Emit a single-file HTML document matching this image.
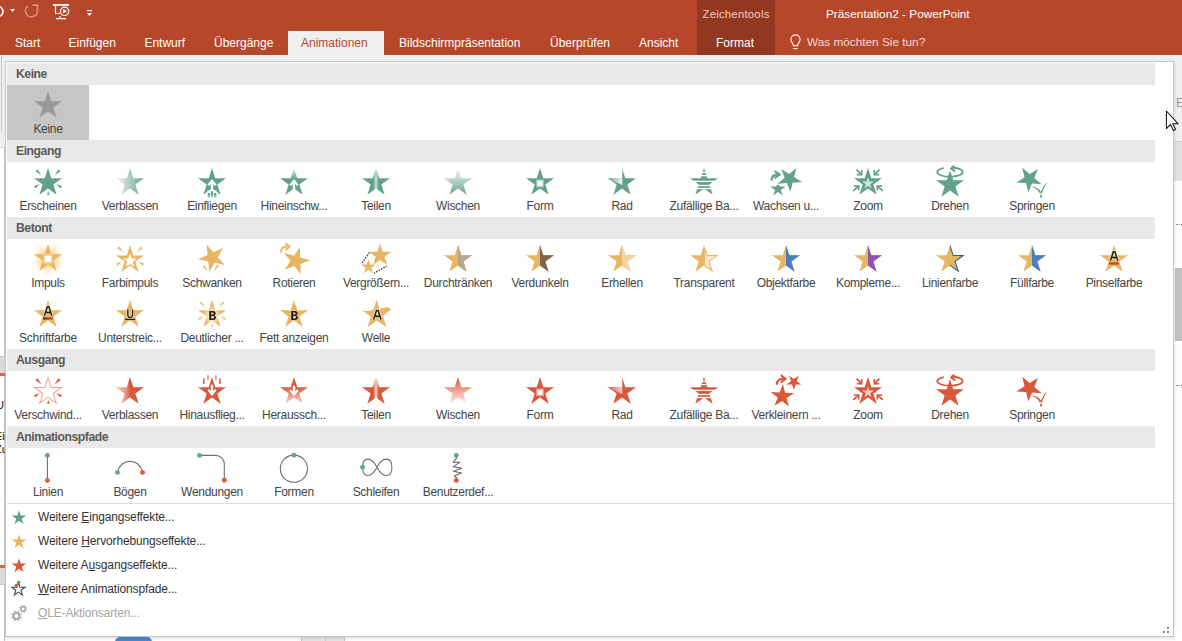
<!DOCTYPE html><html><head><meta charset="utf-8"><style>
*{margin:0;padding:0;box-sizing:border-box}
body{width:1182px;height:641px;overflow:hidden;background:#fff;position:relative;font-family:"Liberation Sans",sans-serif}
.a{position:absolute}
.tab{position:absolute;top:36px;color:#fff;font-size:12px;line-height:14px;white-space:nowrap}
.hd{position:absolute;left:7px;width:1148px;height:22px;background:#E9E9E9}
.hd span{position:absolute;left:9px;top:3.6px;font-weight:bold;font-size:12.2px;letter-spacing:-0.45px;color:#5A5A5A;line-height:14px}
.cell{position:absolute;width:82px;height:55px}
.cell svg{position:absolute;left:0;top:0;overflow:hidden}
.lb{position:absolute;left:-10px;width:102px;top:36.8px;text-align:center;font-size:12px;letter-spacing:-0.3px;line-height:14px;color:#444;white-space:nowrap}
.mi{position:absolute;left:38px;font-size:12px;letter-spacing:-0.15px;color:#3A3A3A;line-height:14px;white-space:nowrap}
</style></head><body>
<div class="a" style="left:0;top:55px;width:1182px;height:92px;background:#F0F0F0"></div>
<div class="a" style="left:0;top:147px;width:1182px;height:1px;background:#D4D4D4"></div>
<div class="a" style="left:0;top:148px;width:1182px;height:493px;background:#FFFFFF"></div>
<div class="a" style="left:1px;top:56px;width:1px;height:76px;background:#C8C8C8"></div>
<div class="a" style="left:0;top:148px;width:4px;height:493px;background:#fff"></div>
<div class="a" style="left:4px;top:148px;width:1px;height:493px;background:#C6C6C6"></div>
<div class="a" style="left:0;top:356px;width:5px;height:1px;background:#C4C4C4"></div>
<div class="a" style="left:0;top:357px;width:5px;height:16px;background:#DADADA"></div>
<div class="a" style="left:0;top:373px;width:5px;height:3px;background:#E2633D"></div>
<div class="a" style="left:0;top:565px;width:5px;height:3px;background:#E2633D"></div>
<div class="a" style="left:0;top:568px;width:5px;height:16px;background:#DCDCDC"></div>
<div class="a" style="left:0;top:584px;width:5px;height:1px;background:#C4C4C4"></div>
<div class="a" style="left:0;top:396px;width:5px;height:60px;overflow:hidden;font-size:11px;line-height:13px;color:#111"><div style="position:absolute;left:-4px;top:3px">U</div><div style="position:absolute;left:-5px;top:34px">Ei</div><div style="position:absolute;left:-5px;top:47px">Zu</div></div>
<div class="a" style="left:1174px;top:141px;width:8px;height:40px;background:#E2E2E2;border-top:1px solid #D0D0D0"></div>
<div class="a" style="left:1174px;top:181px;width:8px;height:460px;background:#fff"></div>
<div class="a" style="left:1175px;top:268px;width:7px;height:73px;background:#C2C2C2"></div>
<div class="a" style="left:1176px;top:224px;width:6px;height:0;border-top:1px dotted #888"></div>
<div class="a" style="left:1176px;top:385px;width:6px;height:0;border-top:1px dotted #888"></div>
<div class="a" style="left:1176px;top:96px;font-size:12px;color:#9A9A9A;line-height:14px">E</div>
<div class="a" style="left:115px;top:637px;width:37px;height:8px;background:#4A88D0;border-radius:5px 5px 0 0"></div>
<div class="a" style="left:301px;top:637px;width:44px;height:4px;background:#E6E6E6;border-left:1px solid #C8C8C8;border-right:1px solid #C8C8C8"></div>
<div class="a" style="left:325px;top:637px;width:1px;height:4px;background:#C8C8C8"></div>
<div class="a" style="left:0;top:0;width:1182px;height:55px;background:#B7472A"></div>
<div class="a" style="left:697px;top:0;width:78px;height:55px;background:#923821"></div>
<div class="a" style="left:288px;top:31px;width:96px;height:24px;background:#F0F0F0"></div>
<div class="tab" style="left:15px">Start</div>
<div class="tab" style="left:68.5px">Einfügen</div>
<div class="tab" style="left:144.4px">Entwurf</div>
<div class="tab" style="left:214px">Übergänge</div>
<div class="tab" style="left:399px">Bildschirmpräsentation</div>
<div class="tab" style="left:550px">Überprüfen</div>
<div class="tab" style="left:639px">Ansicht</div>
<div class="tab" style="left:716px">Format</div>
<div class="tab" style="left:301px;color:#B7472A">Animationen</div>
<div class="tab" style="left:702.5px;top:7px;color:#F2CDBF;font-size:11.3px;letter-spacing:0.25px">Zeichentools</div>
<div class="tab" style="left:826px;top:7px;font-size:11.8px">Präsentation2 - PowerPoint</div>
<div class="tab" style="left:807px;top:35px;color:#F5DAD2;font-size:11.8px">Was möchten Sie tun?</div>
<svg class="a" style="left:786px;top:33px" width="18" height="18" viewBox="0 0 18 18"><path d="M7.4 12.6 C7.4 10.4 4.9 9.2 4.9 6.4 C4.9 3.7 7 1.8 9.5 1.8 C12 1.8 14.1 3.7 14.1 6.4 C14.1 9.2 11.6 10.4 11.6 12.6 Z" fill="none" stroke="#FFF4F0" stroke-width="1.15"/><path d="M7.3 15.6 L11.7 15.6" stroke="#FFF4F0" stroke-width="1.2"/></svg>
<svg class="a" style="left:0;top:0" width="100" height="26" viewBox="0 0 100 26"><path d="M-2 6.5 A5 5 0 1 1 -2 16.5" fill="none" stroke="#fff" stroke-width="1.6"/><path d="M10 9 L15 9 L12.5 12 Z" fill="#fff"/><path d="M27.97 5.95 A6 6 0 1 0 37.14 8.75" fill="none" stroke="#D98E7A" stroke-width="1.7"/><path d="M32.3 5.1 L37.4 5.1 L37.4 10" fill="none" stroke="#D98E7A" stroke-width="1.7"/><rect x="53" y="4" width="16" height="1.8" fill="#fff"/><path d="M55.5 5.5 L55.5 13.5 L60 13.5" fill="none" stroke="#fff" stroke-width="1.2"/><circle cx="64.6" cy="11.3" r="4.2" fill="none" stroke="#fff" stroke-width="1.2"/><path d="M63.2 9.1 L67 11.3 L63.2 13.5 Z" fill="#fff"/><path d="M56 18.6 L66 18.6 M59.6 16.2 L61 18.6" fill="none" stroke="#fff" stroke-width="1.2"/><path d="M87 10.6 L92 10.6" stroke="#fff" stroke-width="1.1"/><path d="M87 13 L92 13 L89.5 16 Z" fill="#fff"/></svg>
<div class="a" style="left:6px;top:62px;width:1169px;height:577px;background:rgba(0,0,0,0.10);filter:blur(1.5px)"></div>
<div class="a" style="left:5px;top:61px;width:1169px;height:576px;background:#fff;border:1px solid #C6C6C6"></div>
<div class="hd" style="top:63px"><span>Keine</span></div>
<div class="hd" style="top:140px"><span>Eingang</span></div>
<div class="hd" style="top:217px"><span>Betont</span></div>
<div class="hd" style="top:349px"><span>Ausgang</span></div>
<div class="hd" style="top:426px"><span>Animationspfade</span></div>
<div class="cell" style="left:7px;top:85px;background:#C6C6C6"><svg width="82" height="37" viewBox="0 0 82 37"><path d="M41.00 6.10 L44.30 16.26 L54.98 16.26 L46.34 22.54 L49.64 32.69 L41.00 26.42 L32.36 32.69 L35.66 22.54 L27.02 16.26 L37.70 16.26Z" fill="#9A9A9A" /></svg><div class="lb">Keine</div></div>
<div class="cell" style="left:7px;top:162px"><svg width="82" height="37" viewBox="0 0 82 37"><path d="M41.00 6.10 L44.30 16.26 L54.98 16.26 L46.34 22.54 L49.64 32.69 L41.00 26.42 L32.36 32.69 L35.66 22.54 L27.02 16.26 L37.70 16.26Z" fill="#62A28B" /><path d="M34.50 13.40 L30.36 7.25 L28.44 9.15 Z" fill="#62A28B"/><path d="M47.50 13.40 L53.56 9.15 L51.64 7.25 Z" fill="#62A28B"/><path d="M32.90 22.10 L26.98 24.26 L28.42 26.54 Z" fill="#62A28B"/><path d="M49.10 22.10 L53.58 26.54 L55.02 24.26 Z" fill="#62A28B"/><path d="M41.30 28.90 L39.95 32.80 L42.65 32.80 Z" fill="#62A28B"/></svg><div class="lb">Erscheinen</div></div>
<div class="cell" style="left:89px;top:162px"><svg width="82" height="37" viewBox="0 0 82 37"><defs><linearGradient id="g1" gradientUnits="userSpaceOnUse" x1="26" y1="0" x2="56" y2="0"><stop offset="0" stop-color="#F2F8F6"/><stop offset="1" stop-color="#62A28B"/></linearGradient></defs><path d="M41.00 6.10 L44.30 16.26 L54.98 16.26 L46.34 22.54 L49.64 32.69 L41.00 26.42 L32.36 32.69 L35.66 22.54 L27.02 16.26 L37.70 16.26Z" fill="url(#g1)" /></svg><div class="lb">Verblassen</div></div>
<div class="cell" style="left:171px;top:162px"><svg width="82" height="37" viewBox="0 0 82 37"><path d="M41.00 6.10 L44.30 16.26 L54.98 16.26 L46.34 22.54 L49.64 32.69 L41.00 26.42 L32.36 32.69 L35.66 22.54 L27.02 16.26 L37.70 16.26Z" fill="#62A28B" /><path d="M41 17.1 L45.5 22.5 L44 23.9 L42.2 21.9 L42.2 29 L39.8 29 L39.8 21.9 L38 23.9 L36.5 22.5 Z" fill="#fff"/><rect x="36.3" y="28.6" width="9.4" height="3" fill="#fff"/><defs><linearGradient id="g2" gradientUnits="userSpaceOnUse" x1="0" y1="29" x2="0" y2="36.5"><stop offset="0" stop-color="#62A28B"/><stop offset="0.55" stop-color="#62A28B"/><stop offset="1" stop-color="#fff"/></linearGradient></defs><rect x="36.7" y="31" width="2.3" height="5.5" fill="url(#g2)"/><rect x="39.9" y="29.2" width="2.3" height="7.3" fill="url(#g2)"/><rect x="43.1" y="31" width="2.3" height="5.5" fill="url(#g2)"/></svg><div class="lb">Einfliegen</div></div>
<div class="cell" style="left:253px;top:162px"><svg width="82" height="37" viewBox="0 0 82 37"><defs><linearGradient id="g3" gradientUnits="userSpaceOnUse" x1="0" y1="6" x2="0" y2="24"><stop offset="0" stop-color="#E6F1ED"/><stop offset="0.6" stop-color="#62A28B"/><stop offset="1" stop-color="#62A28B"/></linearGradient></defs><path d="M41.00 6.10 L44.30 16.26 L54.98 16.26 L46.34 22.54 L49.64 32.69 L41.00 26.42 L32.36 32.69 L35.66 22.54 L27.02 16.26 L37.70 16.26Z" fill="url(#g3)" /><path d="M41 17.1 L45.5 22.5 L44 23.9 L42.2 21.9 L42.2 28.2 L39.8 28.2 L39.8 21.9 L38 23.9 L36.5 22.5 Z" fill="#fff"/></svg><div class="lb">Hineinschw...</div></div>
<div class="cell" style="left:335px;top:162px"><svg width="82" height="37" viewBox="0 0 82 37"><defs><linearGradient id="g4" gradientUnits="userSpaceOnUse" x1="37.5" y1="0" x2="44.5" y2="0"><stop offset="0" stop-color="#62A28B"/><stop offset="0.12" stop-color="#62A28B"/><stop offset="0.32" stop-color="#9CC6B7"/><stop offset="0.5" stop-color="#D0E5DD"/><stop offset="0.68" stop-color="#9CC6B7"/><stop offset="0.88" stop-color="#62A28B"/><stop offset="1" stop-color="#62A28B"/></linearGradient></defs><path d="M41.00 6.10 L44.30 16.26 L54.98 16.26 L46.34 22.54 L49.64 32.69 L41.00 26.42 L32.36 32.69 L35.66 22.54 L27.02 16.26 L37.70 16.26Z" fill="url(#g4)" /></svg><div class="lb">Teilen</div></div>
<div class="cell" style="left:417px;top:162px"><svg width="82" height="37" viewBox="0 0 82 37"><defs><linearGradient id="g5" gradientUnits="userSpaceOnUse" x1="0" y1="6" x2="0" y2="34"><stop offset="0" stop-color="#F4F9F7"/><stop offset="1" stop-color="#62A28B"/></linearGradient></defs><path d="M41.00 6.10 L44.30 16.26 L54.98 16.26 L46.34 22.54 L49.64 32.69 L41.00 26.42 L32.36 32.69 L35.66 22.54 L27.02 16.26 L37.70 16.26Z" fill="url(#g5)" /></svg><div class="lb">Wischen</div></div>
<div class="cell" style="left:499px;top:162px"><svg width="82" height="37" viewBox="0 0 82 37"><path d="M41.00 6.10 L44.30 16.26 L54.98 16.26 L46.34 22.54 L49.64 32.69 L41.00 26.42 L32.36 32.69 L35.66 22.54 L27.02 16.26 L37.70 16.26Z" fill="#62A28B" /><rect x="37.20" y="17.60" width="7.6" height="7.6" fill="#A9CDBF"/><rect x="38.20" y="18.60" width="5.6" height="5.6" fill="#DDEDE7"/><rect x="39.00" y="19.40" width="4" height="4" fill="#fff"/></svg><div class="lb">Form</div></div>
<div class="cell" style="left:581px;top:162px"><svg width="82" height="37" viewBox="0 0 82 37"><defs><linearGradient id="g6" gradientUnits="userSpaceOnUse" x1="27" y1="0" x2="41.3" y2="0"><stop offset="0" stop-color="#62A28B"/><stop offset="1" stop-color="#F2F8F5"/></linearGradient></defs><path d="M41.00 6.10 L44.30 16.26 L54.98 16.26 L46.34 22.54 L49.64 32.69 L41.00 26.42 L32.36 32.69 L35.66 22.54 L27.02 16.26 L37.70 16.26Z" fill="#62A28B" /><rect x="28" y="0" width="13.25" height="16.26" fill="#fff"/><path d="M26.3 16.26 L41.3 16.26 L41.3 23.00 Z" fill="url(#g6)"/></svg><div class="lb">Rad</div></div>
<div class="cell" style="left:663px;top:162px"><svg width="82" height="37" viewBox="0 0 82 37"><path d="M41.00 6.10 L44.30 16.26 L54.98 16.26 L46.34 22.54 L49.64 32.69 L41.00 26.42 L32.36 32.69 L35.66 22.54 L27.02 16.26 L37.70 16.26Z" fill="#62A28B" /><rect x="20" y="9.75" width="42" height="1.30" fill="#fff"/><rect x="20" y="12.95" width="42" height="1.30" fill="#fff"/><rect x="20" y="18.75" width="42" height="1.30" fill="#fff"/><rect x="20" y="22.85" width="42" height="1.30" fill="#fff"/><rect x="20" y="25.85" width="42" height="1.30" fill="#fff"/></svg><div class="lb">Zufällige Ba...</div></div>
<div class="cell" style="left:745px;top:162px"><svg width="82" height="37" viewBox="0 0 82 37"><path d="M32.95 19.00 L34.75 24.53 L40.56 24.53 L35.86 27.94 L37.65 33.47 L32.95 30.06 L28.25 33.47 L30.04 27.94 L25.34 24.53 L31.15 24.53Z" fill="#62A28B" /><path d="M51.34 5.96 L49.07 15.05 L57.02 20.02 L47.67 20.67 L45.40 29.77 L41.89 21.08 L32.54 21.73 L39.72 15.71 L36.21 7.02 L44.16 11.98Z" fill="#fff" stroke="#fff" stroke-width="2.4"/><path d="M51.34 5.96 L49.07 15.05 L57.02 20.02 L47.67 20.67 L45.40 29.77 L41.89 21.08 L32.54 21.73 L39.72 15.71 L36.21 7.02 L44.16 11.98Z" fill="#62A28B" /><path d="M26.6 18.6 C26.6 14.6 29 12.4 33.4 12.4" fill="none" stroke="#62A28B" stroke-width="2.3"/><path d="M29.6 9.2 L34.6 12.6 L29.6 16.2" fill="none" stroke="#62A28B" stroke-width="2.2"/></svg><div class="lb">Wachsen u...</div></div>
<div class="cell" style="left:827px;top:162px"><svg width="82" height="37" viewBox="0 0 82 37"><path d="M41.00 6.10 L44.30 16.26 L54.98 16.26 L46.34 22.54 L49.64 32.69 L41.00 26.42 L32.36 32.69 L35.66 22.54 L27.02 16.26 L37.70 16.26Z" fill="#62A28B" /><path d="M41.00 15.20 L42.39 19.48 L46.90 19.48 L43.25 22.13 L44.64 26.42 L41.00 23.77 L37.36 26.42 L38.75 22.13 L35.10 19.48 L39.61 19.48Z" fill="#D3E5DE" /><path d="M29.60 7.6 L34.40 12.4" stroke="#62A28B" stroke-width="1.8"/><path d="M29.80 12.6 L34.70 12.6 L34.70 8" fill="none" stroke="#62A28B" stroke-width="1.6"/><path d="M26.30 28.9 L31.70 24" stroke="#62A28B" stroke-width="1.8"/><path d="M26.80 24 L31.70 24 L31.70 28.6" fill="none" stroke="#62A28B" stroke-width="1.6"/><path d="M52.40 7.6 L47.60 12.4" stroke="#62A28B" stroke-width="1.8"/><path d="M52.20 12.6 L47.30 12.6 L47.30 8" fill="none" stroke="#62A28B" stroke-width="1.6"/><path d="M55.70 28.9 L50.30 24" stroke="#62A28B" stroke-width="1.8"/><path d="M55.20 24 L50.30 24 L50.30 28.6" fill="none" stroke="#62A28B" stroke-width="1.6"/></svg><div class="lb">Zoom</div></div>
<div class="cell" style="left:909px;top:162px"><svg width="82" height="37" viewBox="0 0 82 37"><path d="M41.00 8.14 L44.30 18.30 L54.98 18.30 L46.34 24.58 L49.64 34.73 L41.00 28.46 L32.36 34.73 L35.66 24.58 L27.02 18.30 L37.70 18.30Z" fill="#62A28B" /><path d="M34.7 6.09 A12.7 4.6 0 1 0 42.3 5.52" fill="none" stroke="#62A28B" stroke-width="1.8"/><path d="M45.3 3.8 L42.3 6.6 L46.2 9.4" fill="none" stroke="#62A28B" stroke-width="2"/></svg><div class="lb">Drehen</div></div>
<div class="cell" style="left:991px;top:162px"><svg width="82" height="37" viewBox="0 0 82 37"><path d="M46.91 6.94 L43.27 15.96 L50.72 22.22 L41.01 21.54 L37.37 30.57 L35.01 21.12 L25.30 20.44 L33.55 15.28 L31.20 5.84 L38.66 12.09Z" fill="#62A28B" /><path d="M41.5 24.8 C45.5 24.6 48 26.8 49.9 29.8 C51.5 25.6 53.6 22.2 56.8 19.9 C54.2 23.2 52.3 27.2 51.1 31.2 L48.7 31.2 C46.8 27.8 44.8 25.8 41.5 25.5 Z" fill="#62A28B"/><rect x="49.2" y="32.6" width="1.7" height="3" fill="#62A28B"/></svg><div class="lb">Springen</div></div>
<div class="cell" style="left:7px;top:239px"><svg width="82" height="37" viewBox="0 0 82 37"><defs><filter id="g7" x="-50%" y="-50%" width="200%" height="200%"><feGaussianBlur stdDeviation="2.2"/></filter></defs><path d="M50.70 6.55 L48.06 17.61 L56.69 25.00 L45.36 25.91 L41.00 36.40 L36.64 25.91 L25.31 25.00 L33.94 17.61 L31.30 6.55 L41.00 12.47Z" fill="#F8E4B8" filter="url(#g7)"/><path d="M41.00 3.90 L44.59 14.96 L56.22 14.96 L46.81 21.79 L50.40 32.84 L41.00 26.01 L31.60 32.84 L35.19 21.79 L25.78 14.96 L37.41 14.96Z" fill="#F5DCA6" filter="url(#g7)"/><path d="M41.00 5.20 L44.30 15.36 L54.98 15.36 L46.34 21.64 L49.64 31.79 L41.00 25.52 L32.36 31.79 L35.66 21.64 L27.02 15.36 L37.70 15.36Z" fill="#E8B563" /><defs><filter id="g8" x="-100%" y="-100%" width="300%" height="300%"><feGaussianBlur stdDeviation="1.3"/></filter></defs><rect x="37" y="15.9" width="8" height="8" fill="#FBEFD3" filter="url(#g8)"/><rect x="38.1" y="17" width="5.8" height="5.8" fill="#fff"/></svg><div class="lb">Impuls</div></div>
<div class="cell" style="left:89px;top:239px"><svg width="82" height="37" viewBox="0 0 82 37"><defs><radialGradient id="g9" cx="41" cy="21.8" r="8" gradientUnits="userSpaceOnUse"><stop offset="0.35" stop-color="#fff"/><stop offset="0.8" stop-color="#FBEBC0"/><stop offset="1" stop-color="#F3D48C"/></radialGradient></defs><path d="M41.00 6.30 L44.30 16.46 L54.98 16.46 L46.34 22.74 L49.64 32.89 L41.00 26.62 L32.36 32.89 L35.66 22.74 L27.02 16.46 L37.70 16.46Z" fill="#E8B563" /><path d="M41.00 14.10 L42.75 19.49 L48.42 19.49 L43.83 22.82 L45.58 28.21 L41.00 24.88 L36.42 28.21 L38.17 22.82 L33.58 19.49 L39.25 19.49Z" fill="url(#g9)"/><path d="M34.50 13.60 L30.36 7.45 L28.44 9.35 Z" fill="#E8B563"/><path d="M47.50 13.60 L53.56 9.35 L51.64 7.45 Z" fill="#E8B563"/><path d="M32.90 22.30 L26.98 24.46 L28.42 26.74 Z" fill="#E8B563"/><path d="M49.10 22.30 L53.58 26.74 L55.02 24.46 Z" fill="#E8B563"/></svg><div class="lb">Farbimpuls</div></div>
<div class="cell" style="left:171px;top:239px"><svg width="82" height="37" viewBox="0 0 82 37"><path d="M35.49 5.54 L42.49 13.32 L52.05 9.06 L46.82 18.13 L53.82 25.90 L43.59 23.73 L38.36 32.79 L37.26 22.38 L27.03 20.21 L36.59 15.95Z" fill="#E8B563" /><path d="M31.6 27.6 L33.6 26.2 L37.4 32.8 Z" fill="#E8B563"/><path d="M48.2 26.6 L46.2 25.6 L42.4 32.8 Z" fill="#E8B563"/></svg><div class="lb">Schwanken</div></div>
<div class="cell" style="left:253px;top:239px"><svg width="82" height="37" viewBox="0 0 82 37"><path d="M46.87 7.96 L47.23 18.41 L57.29 21.30 L47.46 24.88 L47.83 35.33 L41.38 27.09 L31.55 30.67 L37.40 21.99 L30.96 13.75 L41.02 16.63Z" fill="#E8B563" /><path d="M28 13.5 C27.8 9.5 30 7.6 34 7.6" fill="none" stroke="#E8B563" stroke-width="2"/><path d="M32.4 4.2 L36.4 7.6 L32.4 11.2" fill="none" stroke="#E8B563" stroke-width="2"/></svg><div class="lb">Rotieren</div></div>
<div class="cell" style="left:335px;top:239px"><svg width="82" height="37" viewBox="0 0 82 37"><path d="M25.5 26.2 L34.8 13" stroke="#505050" stroke-width="1.4" stroke-dasharray="1.7 1.1"/><path d="M38.6 34.4 L51.8 27" stroke="#505050" stroke-width="1.4" stroke-dasharray="1.7 1.1"/><path d="M33.40 20.20 L35.13 25.52 L40.72 25.52 L36.20 28.81 L37.93 34.13 L33.40 30.84 L28.87 34.13 L30.60 28.81 L26.08 25.52 L31.67 25.52Z" fill="#fff" stroke="#fff" stroke-width="1.6"/><path d="M45.10 4.40 L47.79 12.69 L56.51 12.69 L49.46 17.82 L52.15 26.11 L45.10 20.98 L38.05 26.11 L40.74 17.82 L33.69 12.69 L42.41 12.69Z" fill="#E8B563" /><path d="M33.40 20.20 L35.13 25.52 L40.72 25.52 L36.20 28.81 L37.93 34.13 L33.40 30.84 L28.87 34.13 L30.60 28.81 L26.08 25.52 L31.67 25.52Z" fill="#fff" stroke="#fff" stroke-width="1.6"/><path d="M33.40 20.20 L35.13 25.52 L40.72 25.52 L36.20 28.81 L37.93 34.13 L33.40 30.84 L28.87 34.13 L30.60 28.81 L26.08 25.52 L31.67 25.52Z" fill="#E8B563" /></svg><div class="lb">Vergrößern...</div></div>
<div class="cell" style="left:417px;top:239px"><svg width="82" height="37" viewBox="0 0 82 37"><defs><clipPath id="g10"><rect x="41" y="0" width="40" height="40"/></clipPath></defs><path d="M41.00 6.10 L44.30 16.26 L54.98 16.26 L46.34 22.54 L49.64 32.69 L41.00 26.42 L32.36 32.69 L35.66 22.54 L27.02 16.26 L37.70 16.26Z" fill="#E8B563" /><path d="M41.00 6.10 L44.30 16.26 L54.98 16.26 L46.34 22.54 L49.64 32.69 L41.00 26.42 L32.36 32.69 L35.66 22.54 L27.02 16.26 L37.70 16.26Z" fill="#B3A690" clip-path="url(#g10)"/></svg><div class="lb">Durchtränken</div></div>
<div class="cell" style="left:499px;top:239px"><svg width="82" height="37" viewBox="0 0 82 37"><defs><clipPath id="g11"><rect x="41" y="0" width="40" height="40"/></clipPath></defs><path d="M41.00 6.10 L44.30 16.26 L54.98 16.26 L46.34 22.54 L49.64 32.69 L41.00 26.42 L32.36 32.69 L35.66 22.54 L27.02 16.26 L37.70 16.26Z" fill="#E8B563" /><path d="M41.00 6.10 L44.30 16.26 L54.98 16.26 L46.34 22.54 L49.64 32.69 L41.00 26.42 L32.36 32.69 L35.66 22.54 L27.02 16.26 L37.70 16.26Z" fill="#7C6749" clip-path="url(#g11)"/></svg><div class="lb">Verdunkeln</div></div>
<div class="cell" style="left:581px;top:239px"><svg width="82" height="37" viewBox="0 0 82 37"><defs><clipPath id="g12"><rect x="41" y="0" width="40" height="40"/></clipPath></defs><path d="M41.00 6.10 L44.30 16.26 L54.98 16.26 L46.34 22.54 L49.64 32.69 L41.00 26.42 L32.36 32.69 L35.66 22.54 L27.02 16.26 L37.70 16.26Z" fill="#E8B563" /><path d="M41.00 6.10 L44.30 16.26 L54.98 16.26 L46.34 22.54 L49.64 32.69 L41.00 26.42 L32.36 32.69 L35.66 22.54 L27.02 16.26 L37.70 16.26Z" fill="#F4D39E" clip-path="url(#g12)"/></svg><div class="lb">Erhellen</div></div>
<div class="cell" style="left:663px;top:239px"><svg width="82" height="37" viewBox="0 0 82 37"><defs><clipPath id="g13"><rect x="42" y="0" width="40" height="40"/></clipPath></defs><path d="M41.00 6.10 L44.30 16.26 L54.98 16.26 L46.34 22.54 L49.64 32.69 L41.00 26.42 L32.36 32.69 L35.66 22.54 L27.02 16.26 L37.70 16.26Z" fill="#E8B563" /><path d="M41.00 6.10 L44.30 16.26 L54.98 16.26 L46.34 22.54 L49.64 32.69 L41.00 26.42 L32.36 32.69 L35.66 22.54 L27.02 16.26 L37.70 16.26Z" fill="#F8E8CB" stroke="#E8B563" stroke-width="1.1" clip-path="url(#g13)" transform="translate(41 20.8) scale(0.93) translate(-41 -20.8)"/></svg><div class="lb">Transparent</div></div>
<div class="cell" style="left:745px;top:239px"><svg width="82" height="37" viewBox="0 0 82 37"><defs><clipPath id="g14"><rect x="41" y="0" width="40" height="40"/></clipPath></defs><path d="M41.00 6.10 L44.30 16.26 L54.98 16.26 L46.34 22.54 L49.64 32.69 L41.00 26.42 L32.36 32.69 L35.66 22.54 L27.02 16.26 L37.70 16.26Z" fill="#E8B563" /><path d="M41.00 6.10 L44.30 16.26 L54.98 16.26 L46.34 22.54 L49.64 32.69 L41.00 26.42 L32.36 32.69 L35.66 22.54 L27.02 16.26 L37.70 16.26Z" fill="#4A7EBF" clip-path="url(#g14)"/></svg><div class="lb">Objektfarbe</div></div>
<div class="cell" style="left:827px;top:239px"><svg width="82" height="37" viewBox="0 0 82 37"><defs><clipPath id="g15"><rect x="41" y="0" width="40" height="40"/></clipPath></defs><path d="M41.00 6.10 L44.30 16.26 L54.98 16.26 L46.34 22.54 L49.64 32.69 L41.00 26.42 L32.36 32.69 L35.66 22.54 L27.02 16.26 L37.70 16.26Z" fill="#E8B563" /><path d="M41.00 6.10 L44.30 16.26 L54.98 16.26 L46.34 22.54 L49.64 32.69 L41.00 26.42 L32.36 32.69 L35.66 22.54 L27.02 16.26 L37.70 16.26Z" fill="#8E50B4" clip-path="url(#g15)"/></svg><div class="lb">Kompleme...</div></div>
<div class="cell" style="left:909px;top:239px"><svg width="82" height="37" viewBox="0 0 82 37"><defs><clipPath id="g16"><rect x="41" y="0" width="40" height="40"/></clipPath></defs><path d="M41.00 6.10 L44.30 16.26 L54.98 16.26 L46.34 22.54 L49.64 32.69 L41.00 26.42 L32.36 32.69 L35.66 22.54 L27.02 16.26 L37.70 16.26Z" fill="#E8B563" /><path d="M41.00 6.10 L44.30 16.26 L54.98 16.26 L46.34 22.54 L49.64 32.69 L41.00 26.42 L32.36 32.69 L35.66 22.54 L27.02 16.26 L37.70 16.26Z" fill="none" stroke="#2F5F9A" stroke-width="1.1" clip-path="url(#g16)" transform="translate(41 20.8) scale(0.95) translate(-41 -20.8)"/></svg><div class="lb">Linienfarbe</div></div>
<div class="cell" style="left:991px;top:239px"><svg width="82" height="37" viewBox="0 0 82 37"><defs><clipPath id="g17"><rect x="41" y="0" width="40" height="40"/></clipPath></defs><path d="M41.00 6.10 L44.30 16.26 L54.98 16.26 L46.34 22.54 L49.64 32.69 L41.00 26.42 L32.36 32.69 L35.66 22.54 L27.02 16.26 L37.70 16.26Z" fill="#E8B563" /><path d="M41.00 6.10 L44.30 16.26 L54.98 16.26 L46.34 22.54 L49.64 32.69 L41.00 26.42 L32.36 32.69 L35.66 22.54 L27.02 16.26 L37.70 16.26Z" fill="#4A7EBF" clip-path="url(#g17)"/></svg><div class="lb">Füllfarbe</div></div>
<div class="cell" style="left:1073px;top:239px"><svg width="82" height="37" viewBox="0 0 82 37"><path d="M41.00 6.10 L44.30 16.26 L54.98 16.26 L46.34 22.54 L49.64 32.69 L41.00 26.42 L32.36 32.69 L35.66 22.54 L27.02 16.26 L37.70 16.26Z" fill="#E8B563" /><g transform="translate(0 0)"><path d="M37.4 21.8 L40.3 12.8 L41.9 12.8 L44.8 21.8" fill="none" stroke="#FCE9C2" stroke-width="3.2" stroke-linejoin="round"/><path d="M37.4 21.8 L40.3 12.8 L41.9 12.8 L44.8 21.8 M38.7 18.6 L43.5 18.6" fill="none" stroke="#1E1E1E" stroke-width="1.5"/></g><rect x="36.1" y="23.2" width="9.6" height="2.5" fill="#D24A2A"/></svg><div class="lb">Pinselfarbe</div></div>
<div class="cell" style="left:7px;top:294px"><svg width="82" height="37" viewBox="0 0 82 37"><path d="M41.00 6.10 L44.30 16.26 L54.98 16.26 L46.34 22.54 L49.64 32.69 L41.00 26.42 L32.36 32.69 L35.66 22.54 L27.02 16.26 L37.70 16.26Z" fill="#E8B563" /><g transform="translate(0 0)"><path d="M37.4 21.8 L40.3 12.8 L41.9 12.8 L44.8 21.8" fill="none" stroke="#FCE9C2" stroke-width="3.2" stroke-linejoin="round"/><path d="M37.4 21.8 L40.3 12.8 L41.9 12.8 L44.8 21.8 M38.7 18.6 L43.5 18.6" fill="none" stroke="#1E1E1E" stroke-width="1.5"/></g><defs><linearGradient id="g18" gradientUnits="userSpaceOnUse" x1="36" y1="0" x2="46" y2="0"><stop offset="0" stop-color="#2B3657"/><stop offset="0.6" stop-color="#D24A2A"/><stop offset="1" stop-color="#D24A2A"/></linearGradient></defs><rect x="36.1" y="23.2" width="9.6" height="2.5" fill="url(#g18)"/></svg><div class="lb">Schriftfarbe</div></div>
<div class="cell" style="left:89px;top:294px"><svg width="82" height="37" viewBox="0 0 82 37"><path d="M41.00 6.10 L44.30 16.26 L54.98 16.26 L46.34 22.54 L49.64 32.69 L41.00 26.42 L32.36 32.69 L35.66 22.54 L27.02 16.26 L37.70 16.26Z" fill="#E8B563" /><path d="M38.8 15.6 L38.8 20.6 C38.8 23 39.8 23.6 41.2 23.6 C42.6 23.6 43.6 23 43.6 20.6 L43.6 15.6" fill="none" stroke="#FCE9C2" stroke-width="3"/><path d="M38.8 15.6 L38.8 20.6 C38.8 23 39.8 23.6 41.2 23.6 C42.6 23.6 43.6 23 43.6 20.6 L43.6 15.6" fill="none" stroke="#222" stroke-width="1.4"/><rect x="36.1" y="24.8" width="9.8" height="1.2" fill="#222"/></svg><div class="lb">Unterstreic...</div></div>
<div class="cell" style="left:171px;top:294px"><svg width="82" height="37" viewBox="0 0 82 37"><defs><radialGradient id="g19" cx="41" cy="21.5" r="10" gradientUnits="userSpaceOnUse"><stop offset="0.3" stop-color="#FBEBC5"/><stop offset="1" stop-color="#E8B563"/></radialGradient></defs><path d="M41.00 6.10 L44.30 16.26 L54.98 16.26 L46.34 22.54 L49.64 32.69 L41.00 26.42 L32.36 32.69 L35.66 22.54 L27.02 16.26 L37.70 16.26Z" fill="url(#g19)" /><path d="M34.50 13.40 L30.36 7.25 L28.44 9.15 Z" fill="#EFC77E"/><path d="M47.50 13.40 L53.56 9.15 L51.64 7.25 Z" fill="#EFC77E"/><path d="M32.90 22.10 L26.98 24.26 L28.42 26.54 Z" fill="#EFC77E"/><path d="M49.10 22.10 L53.58 26.54 L55.02 24.26 Z" fill="#EFC77E"/><path d="M41.30 28.90 L39.95 32.80 L42.65 32.80 Z" fill="#EFC77E"/><rect x="37.6" y="16.4" width="7.2" height="10" fill="#F7DFA8" opacity="0.8"/><path d="M38.2 17 L42 17 C44 17 44.6 18 44.6 19.2 C44.6 20.4 43.9 21 43 21.2 C44.2 21.4 44.9 22.2 44.9 23.4 C44.9 25 44 25.9 42 25.9 L38.2 25.9 Z M40.2 18.4 L40.2 20.6 L41.6 20.6 C42.2 20.6 42.6 20.2 42.6 19.5 C42.6 18.8 42.2 18.4 41.6 18.4 Z M40.2 22 L40.2 24.5 L41.8 24.5 C42.5 24.5 42.9 24 42.9 23.2 C42.9 22.4 42.5 22 41.8 22 Z" fill="#1E1E1E" fill-rule="evenodd"/></svg><div class="lb">Deutlicher ...</div></div>
<div class="cell" style="left:253px;top:294px"><svg width="82" height="37" viewBox="0 0 82 37"><path d="M41.00 6.10 L44.30 16.26 L54.98 16.26 L46.34 22.54 L49.64 32.69 L41.00 26.42 L32.36 32.69 L35.66 22.54 L27.02 16.26 L37.70 16.26Z" fill="#E8B563" /><rect x="37.6" y="16.4" width="7.2" height="10" fill="#F7DFA8" opacity="0.8"/><path d="M38.2 17 L42 17 C44 17 44.6 18 44.6 19.2 C44.6 20.4 43.9 21 43 21.2 C44.2 21.4 44.9 22.2 44.9 23.4 C44.9 25 44 25.9 42 25.9 L38.2 25.9 Z M40.2 18.4 L40.2 20.6 L41.6 20.6 C42.2 20.6 42.6 20.2 42.6 19.5 C42.6 18.8 42.2 18.4 41.6 18.4 Z M40.2 22 L40.2 24.5 L41.8 24.5 C42.5 24.5 42.9 24 42.9 23.2 C42.9 22.4 42.5 22 41.8 22 Z" fill="#1E1E1E" fill-rule="evenodd"/></svg><div class="lb">Fett anzeigen</div></div>
<div class="cell" style="left:335px;top:294px"><svg width="82" height="37" viewBox="0 0 82 37"><path d="M41.6 5.8 L44.6 15.2 C47 14.2 50 12.8 53 13.4 C54.3 13.7 55.2 14.4 56 15.5 L48 21.4 L51.2 33 L41.8 26.4 L32.6 33.4 L35.8 22.2 C33 20.8 30 18.5 27.2 16 C30.6 17.6 34 17.2 38.6 15.4 Z" fill="#E8B563"/><g transform="translate(1.2 3.6)"><path d="M37.4 21.8 L40.3 12.8 L41.9 12.8 L44.8 21.8" fill="none" stroke="#FCE9C2" stroke-width="3.2" stroke-linejoin="round"/><path d="M37.4 21.8 L40.3 12.8 L41.9 12.8 L44.8 21.8 M38.7 18.6 L43.5 18.6" fill="none" stroke="#1E1E1E" stroke-width="1.5"/></g></svg><div class="lb">Welle</div></div>
<div class="cell" style="left:7px;top:371px"><svg width="82" height="37" viewBox="0 0 82 37"><path d="M41.00 6.80 L44.14 16.47 L54.31 16.47 L46.09 22.45 L49.23 32.13 L41.00 26.15 L32.77 32.13 L35.91 22.45 L27.69 16.47 L37.86 16.47Z" fill="#fff" stroke="#EFA995" stroke-width="1.1"/><path d="M34.50 13.40 L30.36 7.25 L28.44 9.15 Z" fill="#D9573A"/><path d="M47.50 13.40 L53.56 9.15 L51.64 7.25 Z" fill="#D9573A"/><path d="M32.90 22.10 L26.98 24.26 L28.42 26.54 Z" fill="#D9573A"/><path d="M49.10 22.10 L53.58 26.54 L55.02 24.26 Z" fill="#D9573A"/><path d="M41.30 28.90 L39.95 32.80 L42.65 32.80 Z" fill="#D9573A"/></svg><div class="lb">Verschwind...</div></div>
<div class="cell" style="left:89px;top:371px"><svg width="82" height="37" viewBox="0 0 82 37"><defs><linearGradient id="g20" gradientUnits="userSpaceOnUse" x1="26" y1="0" x2="56" y2="0"><stop offset="0" stop-color="#F4C4B5"/><stop offset="0.38" stop-color="#E7957E"/><stop offset="0.5" stop-color="#D9573A"/><stop offset="1" stop-color="#D9573A"/></linearGradient></defs><path d="M41.00 6.10 L44.30 16.26 L54.98 16.26 L46.34 22.54 L49.64 32.69 L41.00 26.42 L32.36 32.69 L35.66 22.54 L27.02 16.26 L37.70 16.26Z" fill="url(#g20)" /></svg><div class="lb">Verblassen</div></div>
<div class="cell" style="left:171px;top:371px"><svg width="82" height="37" viewBox="0 0 82 37"><path d="M41.00 6.10 L44.30 16.26 L54.98 16.26 L46.34 22.54 L49.64 32.69 L41.00 26.42 L32.36 32.69 L35.66 22.54 L27.02 16.26 L37.70 16.26Z" fill="#D9573A" /><defs><linearGradient id="g21" gradientUnits="userSpaceOnUse" x1="0" y1="4" x2="0" y2="13"><stop offset="0" stop-color="#F0A48C"/><stop offset="1" stop-color="#D9573A"/></linearGradient></defs><rect x="32.00" y="7.10" width="1.7" height="5.70" fill="url(#g21)"/><rect x="36.10" y="4.10" width="1.7" height="4.60" fill="url(#g21)"/><rect x="44.00" y="4.10" width="1.7" height="4.60" fill="url(#g21)"/><rect x="48.10" y="7.10" width="1.7" height="5.70" fill="url(#g21)"/><path d="M41 24.9 L45.5 19.5 L44 18.1 L42.2 20.1 L42.2 13.8 L39.8 13.8 L39.8 20.1 L38 18.1 L36.5 19.5 Z" fill="#fff"/></svg><div class="lb">Hinausflieg...</div></div>
<div class="cell" style="left:253px;top:371px"><svg width="82" height="37" viewBox="0 0 82 37"><defs><linearGradient id="g22" gradientUnits="userSpaceOnUse" x1="0" y1="6" x2="0" y2="34"><stop offset="0" stop-color="#D9573A"/><stop offset="0.35" stop-color="#D9573A"/><stop offset="1" stop-color="#FBE6DF"/></linearGradient></defs><path d="M41.00 6.10 L44.30 16.26 L54.98 16.26 L46.34 22.54 L49.64 32.69 L41.00 26.42 L32.36 32.69 L35.66 22.54 L27.02 16.26 L37.70 16.26Z" fill="url(#g22)" /><path d="M41 25.2 L45.5 19.8 L44 18.4 L42.2 20.4 L42.2 14.8 L39.8 14.8 L39.8 20.4 L38 18.4 L36.5 19.8 Z" fill="#fff"/></svg><div class="lb">Heraussch...</div></div>
<div class="cell" style="left:335px;top:371px"><svg width="82" height="37" viewBox="0 0 82 37"><defs><linearGradient id="g23" gradientUnits="userSpaceOnUse" x1="37.5" y1="0" x2="44.5" y2="0"><stop offset="0" stop-color="#D9573A"/><stop offset="0.12" stop-color="#D9573A"/><stop offset="0.32" stop-color="#EC9F88"/><stop offset="0.5" stop-color="#F7D2C6"/><stop offset="0.68" stop-color="#EC9F88"/><stop offset="0.88" stop-color="#D9573A"/><stop offset="1" stop-color="#D9573A"/></linearGradient></defs><path d="M41.00 6.10 L44.30 16.26 L54.98 16.26 L46.34 22.54 L49.64 32.69 L41.00 26.42 L32.36 32.69 L35.66 22.54 L27.02 16.26 L37.70 16.26Z" fill="url(#g23)" /></svg><div class="lb">Teilen</div></div>
<div class="cell" style="left:417px;top:371px"><svg width="82" height="37" viewBox="0 0 82 37"><defs><linearGradient id="g24" gradientUnits="userSpaceOnUse" x1="0" y1="6" x2="0" y2="34"><stop offset="0" stop-color="#D9573A"/><stop offset="1" stop-color="#FFF6F3"/></linearGradient></defs><path d="M41.00 6.10 L44.30 16.26 L54.98 16.26 L46.34 22.54 L49.64 32.69 L41.00 26.42 L32.36 32.69 L35.66 22.54 L27.02 16.26 L37.70 16.26Z" fill="url(#g24)" /></svg><div class="lb">Wischen</div></div>
<div class="cell" style="left:499px;top:371px"><svg width="82" height="37" viewBox="0 0 82 37"><path d="M41.00 6.10 L44.30 16.26 L54.98 16.26 L46.34 22.54 L49.64 32.69 L41.00 26.42 L32.36 32.69 L35.66 22.54 L27.02 16.26 L37.70 16.26Z" fill="#D9573A" /><rect x="37.20" y="17.60" width="7.6" height="7.6" fill="#EDA08A"/><rect x="38.20" y="18.60" width="5.6" height="5.6" fill="#F8D7CC"/><rect x="39.00" y="19.40" width="4" height="4" fill="#fff"/></svg><div class="lb">Form</div></div>
<div class="cell" style="left:581px;top:371px"><svg width="82" height="37" viewBox="0 0 82 37"><defs><linearGradient id="g25" gradientUnits="userSpaceOnUse" x1="27" y1="0" x2="41.3" y2="0"><stop offset="0" stop-color="#D9573A"/><stop offset="1" stop-color="#F6D3C8"/></linearGradient></defs><path d="M41.00 6.10 L44.30 16.26 L54.98 16.26 L46.34 22.54 L49.64 32.69 L41.00 26.42 L32.36 32.69 L35.66 22.54 L27.02 16.26 L37.70 16.26Z" fill="#D9573A" /><rect x="28" y="0" width="13.25" height="16.26" fill="#fff"/><path d="M26.3 16.26 L41.3 16.26 L41.3 23.00 Z" fill="url(#g25)"/></svg><div class="lb">Rad</div></div>
<div class="cell" style="left:663px;top:371px"><svg width="82" height="37" viewBox="0 0 82 37"><path d="M41.00 6.10 L44.30 16.26 L54.98 16.26 L46.34 22.54 L49.64 32.69 L41.00 26.42 L32.36 32.69 L35.66 22.54 L27.02 16.26 L37.70 16.26Z" fill="#D9573A" /><rect x="20" y="9.75" width="42" height="1.30" fill="#fff"/><rect x="20" y="12.95" width="42" height="1.30" fill="#fff"/><rect x="20" y="18.75" width="42" height="1.30" fill="#fff"/><rect x="20" y="22.85" width="42" height="1.30" fill="#fff"/><rect x="20" y="25.85" width="42" height="1.30" fill="#fff"/></svg><div class="lb">Zufällige Ba...</div></div>
<div class="cell" style="left:745px;top:371px"><svg width="82" height="37" viewBox="0 0 82 37"><path d="M37.84 13.12 L40.13 21.68 L48.98 22.14 L41.55 26.97 L43.84 35.53 L36.96 29.95 L29.52 34.78 L32.70 26.51 L25.81 20.93 L34.66 21.39Z" fill="#D9573A" /><path d="M53.60 4.63 L51.81 10.16 L56.51 13.57 L50.70 13.57 L48.90 19.10 L47.10 13.57 L41.29 13.57 L45.99 10.16 L44.20 4.63 L48.90 8.04Z" fill="#D9573A" /><path d="M31.8 13.8 C31.6 9.8 34.2 7.7 38.6 7.7" fill="none" stroke="#D9573A" stroke-width="2.3"/><path d="M35.8 4.1 L40.4 7.7 L35.8 11.5" fill="none" stroke="#D9573A" stroke-width="2.2"/></svg><div class="lb">Verkleinern ...</div></div>
<div class="cell" style="left:827px;top:371px"><svg width="82" height="37" viewBox="0 0 82 37"><path d="M41.00 6.10 L44.30 16.26 L54.98 16.26 L46.34 22.54 L49.64 32.69 L41.00 26.42 L32.36 32.69 L35.66 22.54 L27.02 16.26 L37.70 16.26Z" fill="#D9573A" /><path d="M41.00 15.20 L42.39 19.48 L46.90 19.48 L43.25 22.13 L44.64 26.42 L41.00 23.77 L37.36 26.42 L38.75 22.13 L35.10 19.48 L39.61 19.48Z" fill="#F3CEC3" /><path d="M29.60 7.6 L34.40 12.4" stroke="#D9573A" stroke-width="1.8"/><path d="M29.80 12.6 L34.70 12.6 L34.70 8" fill="none" stroke="#D9573A" stroke-width="1.6"/><path d="M26.30 28.9 L31.70 24" stroke="#D9573A" stroke-width="1.8"/><path d="M26.80 24 L31.70 24 L31.70 28.6" fill="none" stroke="#D9573A" stroke-width="1.6"/><path d="M52.40 7.6 L47.60 12.4" stroke="#D9573A" stroke-width="1.8"/><path d="M52.20 12.6 L47.30 12.6 L47.30 8" fill="none" stroke="#D9573A" stroke-width="1.6"/><path d="M55.70 28.9 L50.30 24" stroke="#D9573A" stroke-width="1.8"/><path d="M55.20 24 L50.30 24 L50.30 28.6" fill="none" stroke="#D9573A" stroke-width="1.6"/></svg><div class="lb">Zoom</div></div>
<div class="cell" style="left:909px;top:371px"><svg width="82" height="37" viewBox="0 0 82 37"><path d="M41.00 8.14 L44.30 18.30 L54.98 18.30 L46.34 24.58 L49.64 34.73 L41.00 28.46 L32.36 34.73 L35.66 24.58 L27.02 18.30 L37.70 18.30Z" fill="#D9573A" /><path d="M34.7 6.09 A12.7 4.6 0 1 0 42.3 5.52" fill="none" stroke="#D9573A" stroke-width="1.8"/><path d="M45.3 3.8 L42.3 6.6 L46.2 9.4" fill="none" stroke="#D9573A" stroke-width="2"/></svg><div class="lb">Drehen</div></div>
<div class="cell" style="left:991px;top:371px"><svg width="82" height="37" viewBox="0 0 82 37"><path d="M46.91 6.94 L43.27 15.96 L50.72 22.22 L41.01 21.54 L37.37 30.57 L35.01 21.12 L25.30 20.44 L33.55 15.28 L31.20 5.84 L38.66 12.09Z" fill="#D9573A" /><path d="M41.5 24.8 C45.5 24.6 48 26.8 49.9 29.8 C51.5 25.6 53.6 22.2 56.8 19.9 C54.2 23.2 52.3 27.2 51.1 31.2 L48.7 31.2 C46.8 27.8 44.8 25.8 41.5 25.5 Z" fill="#D9573A"/><rect x="49.2" y="32.6" width="1.7" height="3" fill="#D9573A"/></svg><div class="lb">Springen</div></div>
<div class="cell" style="left:7px;top:448px"><svg width="82" height="37" viewBox="0 0 82 37"><path d="M40.4 7.4 L40.4 32.4" stroke="#6E6E6E" stroke-width="1.1"/><circle cx="40.4" cy="7.4" r="2.45" fill="#66A48D"/><circle cx="40.4" cy="32.4" r="2.45" fill="#DD5B3B"/></svg><div class="lb">Linien</div></div>
<div class="cell" style="left:89px;top:448px"><svg width="82" height="37" viewBox="0 0 82 37"><path d="M28.5 23.6 C31 16 36 13.4 41 13.4 C46 13.4 51 16 53.5 23.6" fill="none" stroke="#6E6E6E" stroke-width="1.1"/><circle cx="28.5" cy="24.4" r="2.45" fill="#66A48D"/><circle cx="53.5" cy="24.4" r="2.45" fill="#DD5B3B"/></svg><div class="lb">Bögen</div></div>
<div class="cell" style="left:171px;top:448px"><svg width="82" height="37" viewBox="0 0 82 37"><path d="M28.5 7.4 L44.5 7.4 C49.5 7.4 53.3 11.2 53.3 16.2 L53.3 32.3" fill="none" stroke="#6E6E6E" stroke-width="1.1"/><circle cx="28.5" cy="7.4" r="2.45" fill="#66A48D"/><circle cx="53.3" cy="32.3" r="2.45" fill="#DD5B3B"/></svg><div class="lb">Wendungen</div></div>
<div class="cell" style="left:253px;top:448px"><svg width="82" height="37" viewBox="0 0 82 37"><circle cx="40.9" cy="20.7" r="13.6" fill="none" stroke="#6E6E6E" stroke-width="1.1"/><circle cx="40.9" cy="7.3" r="2.45" fill="#66A48D"/></svg><div class="lb">Formen</div></div>
<div class="cell" style="left:335px;top:448px"><svg width="82" height="37" viewBox="0 0 82 37"><path d="M42 19.3 C45 13 48.5 11.1 51.5 11.1 C55.5 11.1 56.9 15 56.9 19.3 C56.9 23.6 55.5 27.5 51.5 27.5 C48.5 27.5 45 25.6 42 19.3 C39 13 35.5 11.1 32.5 11.1 C28.8 11.1 27.6 15 27.6 19.3 C27.6 23.6 28.8 27.5 32.5 27.5 C35.5 27.5 39 25.6 42 19.3 Z" fill="none" stroke="#6E6E6E" stroke-width="1.1"/><circle cx="27.6" cy="19.3" r="2.45" fill="#66A48D"/></svg><div class="lb">Schleifen</div></div>
<div class="cell" style="left:417px;top:448px"><svg width="82" height="37" viewBox="0 0 82 37"><path d="M39.4 7.4 L39.4 10.4 L36.3 14.1 L42.8 14.4 L36.3 18.6 L44.7 20.3 L36.3 23.3 L44.7 25 L37.4 27.8 L39.4 29.5 L39.4 32.4" fill="none" stroke="#666" stroke-width="1.1" stroke-linejoin="round"/><circle cx="39.3" cy="7.4" r="2.45" fill="#66A48D"/><circle cx="39.3" cy="32.4" r="2.45" fill="#DD5B3B"/></svg><div class="lb">Benutzerdef...</div></div>
<div class="a" style="left:7px;top:503px;width:1166px;height:1px;background:#DCDCDC"></div>
<div class="mi" style="top:510px;color:#333">Weitere <u>E</u>ingangseffekte...</div>
<div class="mi" style="top:534px;color:#333">Weitere <u>H</u>ervorhebungseffekte...</div>
<div class="mi" style="top:558px;color:#333">Weitere A<u>u</u>sgangseffekte...</div>
<div class="mi" style="top:582px;color:#333"><u>W</u>eitere Animationspfade...</div>
<div class="mi" style="top:606px;color:#A6A6A6"><u>O</u>LE-Aktionsarten...</div>
<svg class="a" style="left:0;top:500px" width="40" height="130" viewBox="0 0 40 130"><path d="M19.00 10.20 L20.73 15.52 L26.32 15.52 L21.80 18.81 L23.53 24.13 L19.00 20.84 L14.47 24.13 L16.20 18.81 L11.68 15.52 L17.27 15.52Z" fill="#62A28B" /><path d="M19.00 34.20 L20.73 39.52 L26.32 39.52 L21.80 42.81 L23.53 48.13 L19.00 44.84 L14.47 48.13 L16.20 42.81 L11.68 39.52 L17.27 39.52Z" fill="#E8B563" /><path d="M19.00 58.20 L20.73 63.52 L26.32 63.52 L21.80 66.81 L23.53 72.13 L19.00 68.84 L14.47 72.13 L16.20 66.81 L11.68 63.52 L17.27 63.52Z" fill="#D9573A" /><path d="M18.40 82.40 L19.97 87.24 L25.06 87.24 L20.94 90.23 L22.51 95.06 L18.40 92.07 L14.29 95.06 L15.86 90.23 L11.74 87.24 L16.83 87.24Z" fill="none" stroke="#444" stroke-width="1.05"/><circle cx="18.6" cy="82.50" r="1.7" fill="#3FA34D"/><circle cx="16.3" cy="85.40" r="1.7" fill="#E0563A"/><path d="M18.99 116.93 L21.49 117.97" stroke="#A9A9A9" stroke-width="1.5"/><path d="M17.53 118.39 L18.57 120.89" stroke="#A9A9A9" stroke-width="1.5"/><path d="M15.47 118.39 L14.43 120.89" stroke="#A9A9A9" stroke-width="1.5"/><path d="M14.01 116.93 L11.51 117.97" stroke="#A9A9A9" stroke-width="1.5"/><path d="M14.01 114.87 L11.51 113.83" stroke="#A9A9A9" stroke-width="1.5"/><path d="M15.47 113.41 L14.43 110.91" stroke="#A9A9A9" stroke-width="1.5"/><path d="M17.53 113.41 L18.57 110.91" stroke="#A9A9A9" stroke-width="1.5"/><path d="M18.99 114.87 L21.49 113.83" stroke="#A9A9A9" stroke-width="1.5"/><circle cx="16.50" cy="115.90" r="2.97" fill="none" stroke="#A9A9A9" stroke-width="1.89"/><path d="M24.90 109.65 L26.70 110.39" stroke="#A9A9A9" stroke-width="1.2"/><path d="M23.85 110.70 L24.59 112.50" stroke="#A9A9A9" stroke-width="1.2"/><path d="M22.35 110.70 L21.61 112.50" stroke="#A9A9A9" stroke-width="1.2"/><path d="M21.30 109.65 L19.50 110.39" stroke="#A9A9A9" stroke-width="1.2"/><path d="M21.30 108.15 L19.50 107.41" stroke="#A9A9A9" stroke-width="1.2"/><path d="M22.35 107.10 L21.61 105.30" stroke="#A9A9A9" stroke-width="1.2"/><path d="M23.85 107.10 L24.59 105.30" stroke="#A9A9A9" stroke-width="1.2"/><path d="M24.90 108.15 L26.70 107.41" stroke="#A9A9A9" stroke-width="1.2"/><circle cx="23.10" cy="108.90" r="2.15" fill="none" stroke="#A9A9A9" stroke-width="1.365"/></svg>
<svg class="a" style="left:1160px;top:624px" width="12" height="12" viewBox="0 0 12 12"><rect x="7" y="3" width="2" height="2" fill="#8A8A8A"/><rect x="3" y="7" width="2" height="2" fill="#8A8A8A"/><rect x="7" y="7" width="2" height="2" fill="#8A8A8A"/></svg>
<svg class="a" style="left:1164px;top:109px" width="16" height="24" viewBox="0 0 16 24"><path d="M2.4 2 L2.4 19.5 L6.5 15.6 L9.4 21.6 L11.6 20.6 L8.8 14.8 L14.2 14.8 Z" fill="#fff" stroke="#1A1A1A" stroke-width="1.1" stroke-linejoin="round"/></svg>
</body></html>
